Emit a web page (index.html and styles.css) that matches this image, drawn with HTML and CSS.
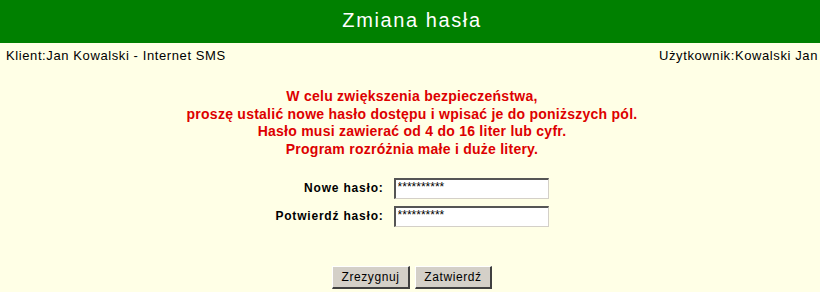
FILE: index.html
```html
<!DOCTYPE html>
<html lang="pl">
<head>
<meta charset="utf-8">
<title>Zmiana hasła</title>
<link rel="stylesheet" href="styles.css">
</head>
<body>
<header class="header">Zmiana hasła</header>
<div class="info">
  <span>Klient:Jan Kowalski - Internet SMS</span>
  <span>Użytkownik:Kowalski Jan</span>
</div>
<div class="message">
  W celu zwiększenia bezpieczeństwa,<br>
  proszę ustalić nowe hasło dostępu i wpisać je do poniższych pól.<br>
  Hasło musi zawierać od 4 do 16 liter lub cyfr.<br>
  Program rozróżnia małe i duże litery.
</div>
<form class="form">
  <div class="fields">
    <label class="label" for="p1">Nowe hasło:</label>
    <input class="field" id="p1" type="text" value="**********">
    <label class="label" for="p2">Potwierdź hasło:</label>
    <input class="field" id="p2" type="text" value="**********">
  </div>
  <div class="buttons">
    <button type="button" class="btn btn-cancel">Zrezygnuj</button>
    <button type="button" class="btn btn-ok">Zatwierdź</button>
  </div>
</form>
</body>
</html>
```
FILE: styles.css
```css
html, body {
  margin: 0;
  padding: 0;
  background: #FFFFE6;
  font-family: "Liberation Sans", Arial, sans-serif;
}
.header {
  height: 43px;
  background: #008000;
  color: #ffffff;
  font-size: 20px;
  letter-spacing: 1.6px;
  text-align: center;
  line-height: 41px;
  padding-left: 4px;
}
.info {
  display: flex;
  justify-content: space-between;
  padding: 0 2px 0 6px;
  font-size: 13px;
  line-height: 15px;
  margin-top: 5px;
  color: #000;
  letter-spacing: 0.6px;
}
.message {
  margin-top: 25px;
  text-align: center;
  color: #DD0000;
  font-weight: bold;
  font-size: 14px;
  letter-spacing: 0.25px;
  line-height: 17.7px;
  padding-left: 4px;
}
.form {
  margin-top: 19px;
  display: flex;
  flex-direction: column;
  align-items: center;
}
.fields {
  display: grid;
  grid-template-columns: auto 155px;
  column-gap: 10px;
  row-gap: 7px;
  align-items: center;
  padding-left: 4px;
}
.label {
  text-align: right;
  font-weight: bold;
  font-size: 12px;
  letter-spacing: 0.8px;
}
.field {
  box-sizing: border-box;
  width: 155px;
  height: 21px;
  margin: 0;
  padding: 0 2px 4px;
  background: #fff;
  border-style: solid;
  border-width: 2px 1px 1px 2px;
  border-color: #555 #d4d0c8 #d4d0c8 #555;
  font-family: "Liberation Sans", Arial, sans-serif;
  font-size: 12px;
  color: #000;
  outline: none;
}
.buttons {
  display: flex;
  gap: 5px;
  margin-top: 39px;
  padding-left: 4px;
}
.btn {
  box-sizing: border-box;
  height: 23px;
  background: #D4D0C8;
  border-style: solid;
  border-width: 1px 2px 2px 1px;
  border-color: #fff #404040 #404040 #fff;
  font-family: "Liberation Sans", Arial, sans-serif;
  font-size: 12px;
  letter-spacing: 0.6px;
  color: #000;
  padding: 0;
}
.btn-cancel { width: 78px; }
.btn-ok { width: 77px; }
```
